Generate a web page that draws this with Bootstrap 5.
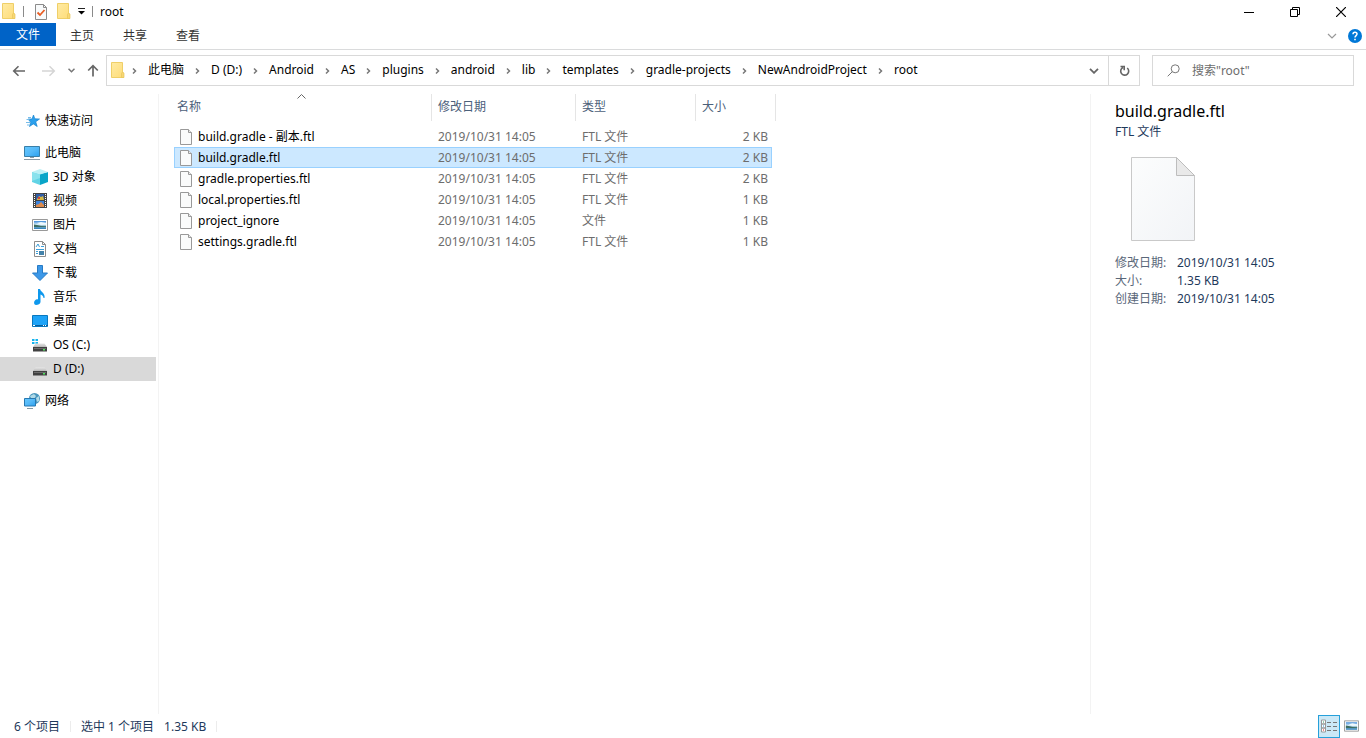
<!DOCTYPE html>
<html lang="zh-CN">
<head>
<meta charset="utf-8">
<meta name="viewport" content="width=device-width, initial-scale=1">
<title>root</title>
<link href="https://cdn.jsdelivr.net/npm/bootstrap@5.3.0/dist/css/bootstrap.min.css" rel="stylesheet">
<style>
body { font-family: "Noto Sans", "Noto Sans CJK SC", sans-serif; font-size: 12px; line-height: 18px; color: #000; background: #fff; }
svg { display: block; flex: none; }
button { font: inherit; color: inherit; padding: 0; border: 0; background: none; }
.sprite { position: absolute; width: 0; height: 0; }
.titlebar { height: 23px; padding: 0 2px; gap: 7px; }
.titlebar .props { padding: 0 3px 0 4px; }
.sep { width: 1px; height: 11px; background: #8a8a8a; }
.sysbtn { width: 46px; height: 20px; display: flex; align-items: center; justify-content: center; }
.tabs { height: 27px; border-bottom: 1px solid #dadbdc; gap: 1px; }
.tabs .tab { height: 23px; padding: 0 14px; color: #333; }
.tabs .tab-file { width: 56px; padding: 0; background: #0063c7; color: #fff; margin: 0 -1px 3px 0; }
.help { padding: 0 4px 0 10px; }
.address { padding: 5px 12px 8px 12px; }
.history { gap: 12px; margin-right: 7px; }
.box { height: 31px; border: 1px solid #d9d9d9; }
.crumbs { gap: 10px; }
.crumbs .place { margin-right: -4px; }
.crumbs a { color: #000; text-decoration: none; white-space: nowrap; margin-bottom: 1px; }
.refresh { width: 31px; height: 29px; border-left: 1px solid #d9d9d9; }
.search { width: 202px; margin-left: 12px; padding-left: 14px; gap: 12px; }
.search input { border: 0; outline: 0; min-width: 0; padding: 0; color: #6d6d6d; }
.search input::placeholder { color: #6d6d6d; opacity: 1; }
.sidebar { width: 159px; border-right: 1px solid #f3f3f3; padding: 15px 2px 0 0; }
.sidebar a { display: flex; align-items: center; height: 24px; gap: 5px; padding-left: 24px; color: #000; text-decoration: none; }
.sidebar a.sub { padding-left: 32px; }
.sidebar a.chosen { background: #d9d9d9; }
.files { width: 602px; margin-left: 15px; table-layout: fixed; border-collapse: separate; border-spacing: 0; color: #6d6d6d; }
.files th { height: 27px; font-weight: 400; color: #4c607a; padding: 0 0 1px 6px; border-right: 1px solid #e5e5e5; position: relative; }
.files th:first-child { padding-left: 3px; }
.files th svg { position: absolute; left: 123px; top: 0; }
.files tbody::before { content: ""; display: block; height: 5px; }
.files td { height: 21px; padding: 0 0 0 6px; white-space: nowrap; line-height: 19px; border: 1px solid transparent; border-width: 1px 0; }
.files td:first-child { color: #000; padding-left: 5px; border-left-width: 1px; }
.files td:nth-child(4) { text-align: right; padding-right: 3px; border-right-width: 1px; }
.files .picked td:not(:last-child) { background: #cce8ff; border-color: #99d1ff; }
.fname { display: flex; gap: 6px; align-items: center; }
.preview { width: 276px; border-left: 1px solid #f3f3f3; padding: 5px 24px; color: #1e395b; }
.preview h1 { font-size: 16px; line-height: 24px; margin: 0; color: #000; font-weight: 400; }
.thumb { margin: 15px 0 12px 15px; }
.facts { display: grid; grid-template-columns: 62px 1fr; margin: 0; }
.facts dt { font-weight: 400; color: #5a6779; }
.facts dd { margin: 0; }
.statusbar { height: 24px; padding: 0 7px 0 14px; color: #1e395b; }
.statusbar .counts { padding-top: 1px; }
.statusbar .rule { width: 1px; height: 11px; background: #ececec; margin: 0 10px; }
.statusbar .total { margin-left: 10px; }
.view-on { width: 22px; height: 23px; background: #cbe8f6; border: 1px solid #26a0da; display: flex; align-items: center; justify-content: center; }
</style>
<script src="https://cdn.jsdelivr.net/npm/bootstrap@5.3.0/dist/js/bootstrap.bundle.min.js"></script>
</head>
<body class="d-flex flex-column vh-100 overflow-hidden">
<svg class="sprite" aria-hidden="true">
  <defs>
    <linearGradient id="gold" x2="1" y2="1"><stop stop-color="#ffeba4"/><stop offset="1" stop-color="#fedc78"/></linearGradient>
    <linearGradient id="screen" x2="1" y2="1"><stop stop-color="#64c8ff"/><stop offset=".5" stop-color="#55b9f8"/><stop offset="1" stop-color="#2aa0ef"/></linearGradient>
    <linearGradient id="paper" x2="1" y2="1"><stop stop-color="#fcfdfd"/><stop offset="1" stop-color="#f2f4f7"/></linearGradient>
    <linearGradient id="drive" x2="0" y2="1"><stop stop-color="#e6e6e6"/><stop offset="1" stop-color="#b8b8b8"/></linearGradient>
    <linearGradient id="sky" x2="0" y2="1"><stop stop-color="#3f8ad8"/><stop offset=".45" stop-color="#d8edf8"/><stop offset=".6" stop-color="#8fb9c9"/><stop offset="1" stop-color="#2a7dba"/></linearGradient>
    <symbol id="folder" viewBox="0 0 14 17"><path d="M.5.5h11v9.500l1 1V15.500H.5z" fill="url(#gold)" stroke="#efcf68"/><path d="M10.500 15.500v-4l1-1.500 1.500 1.500v4z" fill="#f7d775" stroke="#e8c55a" stroke-width=".7"/></symbol>
    <symbol id="file" viewBox="0 0 12 16"><path d="M.5.500h8l3 3v12H.5z" fill="#fafbfb" stroke="#999"/><path d="M8.500.5v3h3" fill="#ececec" stroke="#999"/></symbol>
    <symbol id="chev" viewBox="0 0 7 8"><path d="M2 1.500l2.500 2.500L2 6.500" fill="none" stroke="#777" stroke-width="1.500"/></symbol>
    <symbol id="photo" viewBox="0 0 16 12"><path d="M.5.5h15v11H.5z" fill="#fff" stroke="#999"/><path d="M2 2h12v8H2z" fill="url(#sky)"/><path d="M2 5.500l3 .5 4 1 5 .2V8H2z" fill="#3d6d62"/><path d="M5 4l4-1 5 1v1.500L9 6z" fill="#eef8fd"/></symbol>
    <symbol id="disk" viewBox="0 0 14 9"><path d="M2.500.5h9L14 4H0z" fill="url(#drive)"/><path d="M0 4h14v4.500H0z" fill="#414141"/><path d="M1 5h12v1H1z" fill="#6c6c6c"/><path d="M10 6h2v1.500h-2z" fill="#4fe35d"/></symbol>
  </defs>
</svg>

<header>
  <div class="titlebar d-flex align-items-center">
    <svg width="14" height="17"><use href="#folder"/></svg>
    <span class="sep"></span>
    <button class="props" aria-label="属性"><svg width="12" height="16" viewBox="0 0 12 16"><path d="M.5.5h8l3 3v12H.5z" fill="#f8fafb" stroke="#8b8b8b"/><path d="M8.500.5v3h3" fill="none" stroke="#8b8b8b"/><path d="M2.500 8.500l2.500 2.500 4.500-5" fill="none" stroke="#e95d23" stroke-width="1.800"/></svg></button>
    <button aria-label="新建文件夹"><svg width="14" height="17"><use href="#folder"/></svg></button>
    <button aria-label="自定义快速访问工具栏"><svg width="7" height="7" viewBox="0 0 7 7"><path d="M0 .5h7" stroke="#222"/><path d="M0 3h7L3.500 6.500z"/></svg></button>
    <span class="sep"></span>
    <span>root</span>
    <div class="ms-auto d-flex">
      <button class="sysbtn" aria-label="最小化"><svg width="10" height="10" viewBox="0 0 10 10"><path d="M0 5.500h10" stroke="#000"/></svg></button>
      <button class="sysbtn" aria-label="向下还原"><svg width="10" height="10" viewBox="0 0 10 10"><path d="M.5 2.500h7v7h-7zM2.500 2.500v-2h7v7h-2" fill="none" stroke="#000"/></svg></button>
      <button class="sysbtn" aria-label="关闭"><svg width="10" height="10" viewBox="0 0 10 10"><path d="M0 0l10 10M10 0L0 10" stroke="#000" stroke-width="1.200"/></svg></button>
    </div>
  </div>
  <div class="tabs d-flex align-items-center">
    <button class="tab tab-file">文件</button>
    <button class="tab">主页</button>
    <button class="tab">共享</button>
    <button class="tab">查看</button>
    <button class="ms-auto" aria-label="最小化功能区"><svg width="10" height="6" viewBox="0 0 10 6"><path d="M1 1l4 4 4-4" fill="none" stroke="#999" stroke-width="1.200"/></svg></button>
    <button class="help" aria-label="帮助"><svg width="14" height="14" viewBox="0 0 14 14"><circle cx="7" cy="7" r="7" fill="#0078d7"/><path d="M5 5.300c0-2.700 4-2.500 4-.2 0 1.500-2 1.500-2 3.400" fill="none" stroke="#fff" stroke-width="1.500"/><path d="M6.200 9.700h1.600v1.500H6.200z" fill="#fff"/></svg></button>
  </div>
  <div class="address d-flex align-items-center">
    <div class="history d-flex align-items-center">
      <button aria-label="后退"><svg width="14" height="12" viewBox="0 0 14 12"><path d="M13 6H2M6.500 1.200L1.700 6l4.800 4.800" fill="none" stroke="#666" stroke-width="1.600"/></svg></button>
      <button class="ps-1" aria-label="前进" disabled><svg width="14" height="12" viewBox="0 0 14 12"><path d="M0 6h11.500M7.500 1.200L12.300 6l-4.800 4.800" fill="none" stroke="#d5d5d5" stroke-width="1.500"/></svg></button>
      <button aria-label="最近浏览的位置"><svg width="7" height="5" viewBox="0 0 7 5"><path d="M.5.7l3 3 3-3" fill="none" stroke="#777" stroke-width="1.500"/></svg></button>
      <button aria-label="上移"><svg width="12" height="13" viewBox="0 0 12 13"><path d="M6 12.500V2M1.200 6.500L6 1.700l4.800 4.800" fill="none" stroke="#666" stroke-width="1.700"/></svg></button>
    </div>
    <nav class="box d-flex align-items-center flex-grow-1 ps-1" aria-label="路径">
      <div class="crumbs d-flex align-items-center flex-grow-1">
        <svg class="place" width="14" height="17"><use href="#folder"/></svg>
        <svg width="7" height="8"><use href="#chev"/></svg><a href="#">此电脑</a>
        <svg width="7" height="8"><use href="#chev"/></svg><a href="#">D (D:)</a>
        <svg width="7" height="8"><use href="#chev"/></svg><a href="#">Android</a>
        <svg width="7" height="8"><use href="#chev"/></svg><a href="#">AS</a>
        <svg width="7" height="8"><use href="#chev"/></svg><a href="#">plugins</a>
        <svg width="7" height="8"><use href="#chev"/></svg><a href="#">android</a>
        <svg width="7" height="8"><use href="#chev"/></svg><a href="#">lib</a>
        <svg width="7" height="8"><use href="#chev"/></svg><a href="#">templates</a>
        <svg width="7" height="8"><use href="#chev"/></svg><a href="#">gradle-projects</a>
        <svg width="7" height="8"><use href="#chev"/></svg><a href="#">NewAndroidProject</a>
        <svg width="7" height="8"><use href="#chev"/></svg><a href="#">root</a>
      </div>
      <button class="px-2 me-0" aria-label="历史记录"><svg width="12" height="6" viewBox="0 0 12 6"><path d="M2 .8l4 4 4-4" fill="none" stroke="#666" stroke-width="1.800"/></svg></button>
      <button class="refresh d-flex align-items-center justify-content-center" aria-label="刷新"><svg width="11" height="12" viewBox="0 0 11 12"><path d="M8.200 3A4 4 0 1 1 4 2.500M1.500 1.500h3.700v3.700" fill="none" stroke="#666" stroke-width="1.600"/></svg></button>
    </nav>
    <label class="box search d-flex align-items-center">
      <svg width="13" height="13" viewBox="0 0 13 13"><circle cx="8.200" cy="4.800" r="4" fill="none" stroke="#777"/><path d="M5.400 7.600L.7 12.300" stroke="#777"/></svg>
      <input type="text" placeholder="搜索&quot;root&quot;" aria-label="搜索">
    </label>
  </div>
</header>

<main class="d-flex flex-grow-1">
  <nav class="sidebar flex-shrink-0" aria-label="导航窗格">
    <a href="#" class="mb-2"><svg width="16" height="16" viewBox="0 0 16 16"><path d="M9.500 2l1.300 3.800 4.700.2-3.800 2.800 1.500 4.700-3.900-2.600L5.500 13.500l1.200-4.200L4 6h4z" fill="#2ba0ed" stroke="#1683cf" stroke-width=".7"/><path d="M4 4.500h3M2.500 6.500h3M2 9.500h4M3 12h2.500" stroke="#77bce9"/></svg>快速访问</a>
    <a href="#"><svg width="16" height="16" viewBox="0 0 16 16"><path d="M.5 1.500h15v10H.5z" fill="url(#screen)" stroke="#397fa8"/><path d="M0 14.500h16M6 12.500h4" stroke="#8b9aa5"/></svg>此电脑</a>
    <a href="#" class="sub"><svg width="16" height="16" viewBox="0 0 16 16"><path d="M0 3l8 2v11l-8-3z" fill="#61d3e5"/><path d="M16 3L8 5v11l8-3z" fill="#08a5c8"/><path d="M0 3l8-3 8 3-8 2.500z" fill="#bdf0f5"/><path d="M0 3l8 2.500V9L0 12z" fill="#8ae2ed"/></svg>3D 对象</a>
    <a href="#" class="sub"><svg width="16" height="16" viewBox="0 0 16 16"><path d="M1 0h14v15H1z" fill="#444"/><path d="M4 1h8v6H4z" fill="#315da7"/><path d="M4 8h8v6H4z" fill="#3c82da"/><path d="M5 6l2-3 2 1 2-1 1 4H5z" fill="#d5b742"/><path d="M6 4h2v2H6z" fill="#d3473f"/><path d="M4 12l3-1 2-2 3 3v2H4z" fill="#df8b4b"/><path d="M2.500 1v14M13.500 1v14" stroke="#fff" stroke-dasharray="1 1"/></svg>视频</a>
    <a href="#" class="sub"><svg width="16" height="12"><use href="#photo"/></svg>图片</a>
    <a href="#" class="sub"><svg width="16" height="16" viewBox="0 0 16 16"><path d="M2.500.5h8l3 3v12h-11z" fill="#fff" stroke="#8d8d8d"/><path d="M10.500.5v3h3" fill="none" stroke="#8d8d8d"/><path d="M4 6l2-3 1.500 3M9 5.500h3M4 8.500h8M4 10.500h2M4 12.500h2" fill="none" stroke="#3c9fda"/><path d="M7 10h5v4H7z" fill="#4382aa"/></svg>文档</a>
    <a href="#" class="sub"><svg width="16" height="16" viewBox="0 0 16 16"><path d="M5.500.5h5v7.500h5L8 15.500.5 8h5z" fill="#3c98e8" stroke="#277bc5"/></svg>下载</a>
    <a href="#" class="sub"><svg width="16" height="16" viewBox="0 0 16 16"><path d="M6 0h2c.5 3 5.500 4 4.500 9h-1c0-2-1.500-3-3-3.500V13c0 2-2.500 3-4.500 3S1.500 13 3 11.500s2.500-1.200 3-1z" fill="#0e98ed"/></svg>音乐</a>
    <a href="#" class="sub"><svg width="16" height="12" viewBox="0 0 16 12"><path d="M.5.5h15v11H.5z" fill="#1ea3f7" stroke="#0878bf"/><path d="M0 10.500h16" stroke="#075e9c"/><path d="M1 10.500h2M11 10.500h1M13 10.500h1" stroke="#fff"/></svg>桌面</a>
    <a href="#" class="sub"><svg width="16" height="14" viewBox="0 0 16 14"><path d="M0 1h2.500v2H0zM3.500 1H6v2H3.500zM0 4h2.500v2H0zM3.500 4H6v2H3.500z" fill="#15b4ee"/><use href="#disk" x="1" y="5" width="14" height="9"/></svg>OS (C:)</a>
    <a href="#" class="sub chosen"><svg width="16" height="14" viewBox="0 0 16 14"><use href="#disk" x="1" y="5" width="14" height="9"/></svg>D (D:)</a>
    <a href="#" class="mt-2"><svg width="16" height="16" viewBox="0 0 16 16"><circle cx="10.500" cy="5.500" r="5.500" fill="#4a96bd"/><path d="M6 3l4-2 2 2-2 3-3-1zM12 5l3-2v5l-2 1z" fill="#b1dae7"/><path d="M.5 5.500h11v7.500H.5z" fill="url(#screen)" stroke="#2878b0"/><path d="M3 15.500h6" stroke="#8297a3"/></svg>网络</a>
  </nav>

  <section class="flex-grow-1">
    <table class="files">
      <colgroup><col style="width:258px"><col style="width:144px"><col style="width:120px"><col style="width:76px"><col style="width:4px"></colgroup>
      <thead><tr><th>名称<svg width="9" height="5" viewBox="0 0 9 5"><path d="M.5 4.500l4-4 4 4" fill="none" stroke="#666"/></svg></th><th>修改日期</th><th>类型</th><th colspan="2">大小</th></tr></thead>
      <tbody>
        <tr><td><span class="fname"><svg width="12" height="16"><use href="#file"/></svg>build.gradle - 副本.ftl</span></td><td>2019/10/31 14:05</td><td>FTL 文件</td><td>2 KB</td><td></td></tr>
        <tr class="picked"><td><span class="fname"><svg width="12" height="16"><use href="#file"/></svg>build.gradle.ftl</span></td><td>2019/10/31 14:05</td><td>FTL 文件</td><td>2 KB</td><td></td></tr>
        <tr><td><span class="fname"><svg width="12" height="16"><use href="#file"/></svg>gradle.properties.ftl</span></td><td>2019/10/31 14:05</td><td>FTL 文件</td><td>2 KB</td><td></td></tr>
        <tr><td><span class="fname"><svg width="12" height="16"><use href="#file"/></svg>local.properties.ftl</span></td><td>2019/10/31 14:05</td><td>FTL 文件</td><td>1 KB</td><td></td></tr>
        <tr><td><span class="fname"><svg width="12" height="16"><use href="#file"/></svg>project_ignore</span></td><td>2019/10/31 14:05</td><td>文件</td><td>1 KB</td><td></td></tr>
        <tr><td><span class="fname"><svg width="12" height="16"><use href="#file"/></svg>settings.gradle.ftl</span></td><td>2019/10/31 14:05</td><td>FTL 文件</td><td>1 KB</td><td></td></tr>
      </tbody>
    </table>
  </section>

  <aside class="preview flex-shrink-0">
    <h1>build.gradle.ftl</h1>
    <div>FTL 文件</div>
    <svg class="thumb" width="66" height="86" viewBox="0 0 66 86"><path d="M1.500 1.500h45l18 18v65h-63z" fill="url(#paper)" stroke="#c9c9c9"/><path d="M46.500 1.500v18h18z" fill="#e9e9e9" stroke="#bdbdbd"/></svg>
    <dl class="facts">
      <dt>修改日期:</dt><dd>2019/10/31 14:05</dd>
      <dt>大小:</dt><dd>1.35 KB</dd>
      <dt>创建日期:</dt><dd>2019/10/31 14:05</dd>
    </dl>
  </aside>
</main>

<footer class="statusbar d-flex align-items-center">
  <div class="counts d-flex align-items-center"><span>6 个项目</span><span class="rule"></span><span>选中 1 个项目</span><span class="total">1.35 KB</span><span class="rule"></span></div>
  <button class="view-on ms-auto" aria-label="详细信息"><svg width="16" height="14" viewBox="0 0 16 14"><path d="M.5 1h4v4h-4zM.5 5h4v4h-4zM.5 9h4v4h-4z" fill="#fff" stroke="#999"/><path d="M6 3.500h4M12 3.500h4M6 7.500h4M12 7.500h4M6 11.500h4M12 11.500h4" stroke="#777"/><path d="M2 2.500h1v1H2z" fill="#396"/><path d="M2 6.500h1v1H2z" fill="#28c"/><path d="M2 10.500h1v1H2z" fill="#e11"/></svg></button>
  <button class="ms-1" aria-label="大缩略图"><svg width="15" height="12"><use href="#photo"/></svg></button>
</footer>
</body>
</html>
